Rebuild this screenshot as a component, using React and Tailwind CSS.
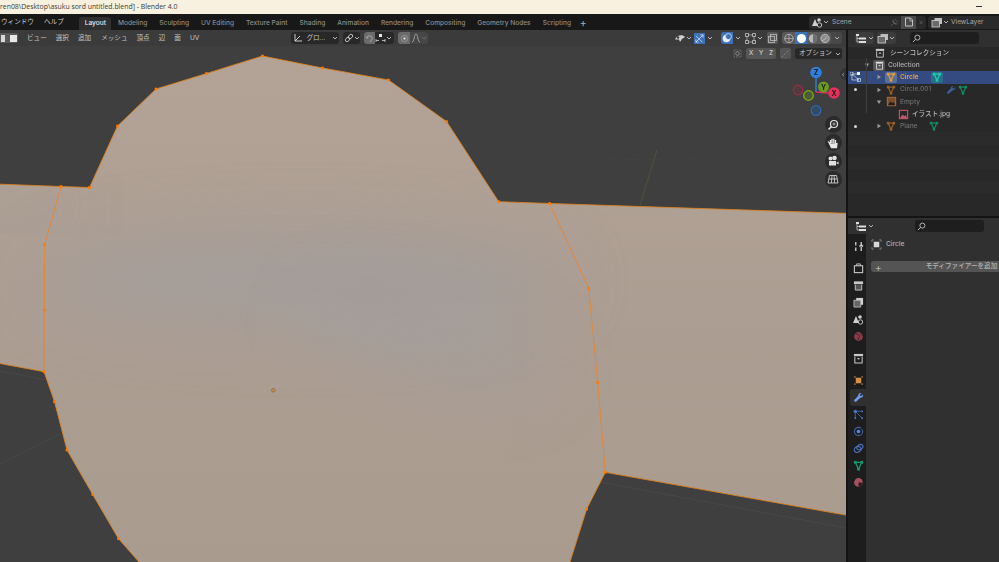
import React from 'react';

const UI_FONT = { fontFamily: 'Inter, "Noto Sans CJK JP", sans-serif' };

const outline = [
  [-5, 184], [61, 186.5], [89.5, 187.5], [117.5, 126], [156, 89], [206.5, 73.5], [262.5, 56], [322.5, 68], [388.5, 80],
  [446.6, 121.6], [498.7, 201.7], [549.7, 203.5], [851, 213.5], [851, 516], [605.3, 472.3], [586.7, 509], [570, 562],
  [570, 570], [139, 570], [139, 562], [118.5, 538.7], [92.7, 494.5], [67, 450], [54.5, 401.7], [44, 371.7], [-5, 362.6],
];
const innerEdges = [
  [[61, 186.5], [44.7, 244.5], [44.3, 310], [44, 371.7]],
  [[549.7, 203.5], [588.7, 288.3], [597.7, 382.3], [605.3, 472.3]],
];
const vertices = [
  [61, 186.5], [89.5, 187.5], [117.5, 126], [156, 89], [206.5, 73.5], [262.5, 56], [322.5, 68], [388.5, 80], [446.6, 121.6],
  [498.7, 201.7], [549.7, 203.5], [588.7, 288.3], [597.7, 382.3], [605.3, 472.3], [586.7, 509], [118.5, 538.7],
  [92.7, 494.5], [67, 450], [54.5, 401.7], [44, 371.7], [44.3, 310], [44.7, 244.5],
];
const pts = (list) => list.map((p) => p.join(',')).join(' ');

const tabs = ['Layout', 'Modeling', 'Sculpting', 'UV Editing', 'Texture Paint', 'Shading', 'Animation', 'Rendering', 'Compositing', 'Geometry Nodes', 'Scripting'];
const menus = [['ビュー', 'ml-[27px]'], ['選択', 'ml-[9px]'], ['追加', 'ml-[9px]'], ['メッシュ', 'ml-[10px]'], ['頂点', 'ml-[9px]'], ['辺', 'ml-[9px]'], ['面', 'ml-[9px]'], ['UV', 'ml-[9px]']];

const Chevron = ({ className = '' }) => (
  <svg width="6" height="6" viewBox="0 0 6 6" className={className}>
    <path d="M1 2l2 2 2-2" fill="none" stroke="#c4c4c4" strokeWidth="0.9" />
  </svg>
);

const Tri = ({ color = '#c9772e', size = 11 }) => (
  <svg width={size} height={size} viewBox="0 0 12 12">
    <path d="M2.5 2.5h7L6 10z" fill="none" stroke={color} strokeWidth="1.4" />
    <rect x="1" y="1" width="3" height="3" fill={color} />
    <rect x="8" y="1" width="3" height="3" fill={color} />
    <rect x="4.5" y="8.5" width="3" height="3" fill={color} />
  </svg>
);

const Wrench = ({ color = '#6f9cf0', size = 11 }) => (
  <svg width={size} height={size} viewBox="0 0 12 12">
    <path d="M10.8 2.8L8.6 4.6 7.3 3.4 9.2 1.3C7.5.6 5.6 1.8 5.8 4L1.3 8.6c-.6.7 1.3 2.7 2 2L8 6.2c2.1.3 3.4-1.5 2.8-3.4z" fill={color} />
  </svg>
);

const Box = ({ size = 11, color = '#c8c8c8' }) => (
  <svg width={size} height={size} viewBox="0 0 12 12">
    <rect x="1" y="1" width="10" height="2.5" fill={color} />
    <path d="M2 4v7h8V4" fill="none" stroke={color} strokeWidth="1.1" />
    <rect x="4.8" y="5.5" width="2.4" height="1.4" fill={color} />
  </svg>
);

const Arrow = ({ down }) => (
  <svg width="6" height="6" viewBox="0 0 6 6">
    {down ? <path d="M.8 1.5h4.4L3 5z" fill="#9a9a9a" /> : <path d="M1.5.8v4.4L5 3z" fill="#9a9a9a" />}
  </svg>
);

const ImageIcon = ({ color }) => (
  <svg width="11" height="11" viewBox="0 0 12 12">
    <rect x="1.5" y="1.5" width="9" height="9" fill={color === '#a9683a' ? '#7c4f2c' : 'none'} stroke={color} strokeWidth="1.2" />
    <path d="M2 10l3-4 2 2 1.5-1.5L10 10z" fill={color === '#a9683a' ? '#1e1e1e' : color} />
  </svg>
);

const OutlinerIcon = () => (
  <svg width="13" height="11" viewBox="0 0 13 11">
    <rect x="1" y="1" width="3" height="2" fill="#ddd" />
    <rect x="4" y="4.5" width="7" height="2" fill="#ddd" />
    <rect x="4" y="8" width="7" height="2" fill="#ddd" />
    <path d="M2 3v6h2M2 5.5h2" stroke="#ddd" strokeWidth="0.7" fill="none" />
  </svg>
);

const DisplayModeIcon = () => (
  <svg width="12" height="11" viewBox="0 0 12 11">
    <rect x="3.5" y="1" width="7.5" height="6" fill="#bdbdbd" />
    <rect x="1" y="3.5" width="7.5" height="6.5" fill="#6a6a6a" stroke="#d0d0d0" strokeWidth="0.8" />
  </svg>
);

const Search = () => (
  <svg width="9" height="9" viewBox="0 0 10 10">
    <circle cx="6" cy="4" r="2.8" fill="none" stroke="#cfcfcf" strokeWidth="0.9" />
    <path d="M4 6L1 9" stroke="#cfcfcf" strokeWidth="1" />
  </svg>
);

const SceneIcon = () => (
  <svg width="12" height="11" viewBox="0 0 12 11">
    <path d="M1 9L4 2l3 7z" fill="#cfcfcf" />
    <circle cx="8" cy="3" r="1.8" fill="#cfcfcf" />
    <circle cx="8.5" cy="8" r="2.2" fill="none" stroke="#cfcfcf" strokeWidth="0.9" />
  </svg>
);

const Dot = () => <span className="block w-[3px] h-[3px] rounded-full bg-[#d8d8d8]" />;

const Row = ({ children, bg = '', mode }) => (
  <div className={`h-[12.2px] flex items-center pl-[1px] ${bg}`}>
    <span className="w-[12px] flex justify-center shrink-0">{mode}</span>
    {children}
  </div>
);

const RowLabel = ({ width, color, children, className = '' }) => (
  <span style={{ width }} className={`ml-[3px] text-[6.6px] font-medium leading-none whitespace-nowrap shrink-0 ${color} ${className}`}>{children}</span>
);

const TabIcon = ({ children, active, className = '' }) => (
  <div className={`h-[17px] w-[16px] ml-[2px] flex items-center justify-center shrink-0 ${active ? 'bg-[#303030] rounded-l-[3px]' : ''} ${className}`}>
    {children}
  </div>
);

const NavButton = ({ children }) => (
  <div className="w-[17px] h-[17px] rounded-full bg-[#2b2b2b] flex items-center justify-center">{children}</div>
);

const Viewport = () => (
  <svg className="absolute inset-0" width="846" height="532" viewBox="0 30 846 532">
    <defs>
      <clipPath id="meshClip"><polygon points={pts(outline)} /></clipPath>
      <filter id="soft" x="-40%" y="-100%" width="180%" height="300%"><feGaussianBlur stdDeviation="32" /></filter>
      <linearGradient id="meshFill" x1="0" y1="56" x2="0" y2="562" gradientUnits="userSpaceOnUse">
        <stop offset="0" stopColor="#b3a396" />
        <stop offset="0.5" stopColor="#ad9e93" />
        <stop offset="1" stopColor="#aa9b8f" />
      </linearGradient>
    </defs>
    {/* floor grid, barely visible */}
    <g stroke="#525252" strokeWidth="0.7" opacity="0.7">
      <path d="M0 371L47 380M0 464L62 433M600 482L846 528" />
      <path d="M510 190L846 185M540 175L846 170M560 160L846 158M720 180L760 210" opacity="0.4" />
    </g>
    <path d="M640 205L657 150" stroke="#4d5a3c" strokeWidth="0.8" />
    <polygon points={pts(outline)} fill="url(#meshFill)" />
    <g clipPath="url(#meshClip)">
      <ellipse cx="300" cy="280" rx="270" ry="48" fill="#9d9d9f" opacity="0.55" filter="url(#soft)" />
      <ellipse cx="430" cy="340" rx="130" ry="45" fill="#9d9d9f" opacity="0.45" filter="url(#soft)" transform="rotate(15 430 340)" />
      <ellipse cx="15" cy="205" rx="60" ry="10" fill="#9c9c9e" opacity="0.7" filter="url(#soft)" />
    </g>
    <polygon points={pts(outline)} fill="none" stroke="#d9801f" strokeWidth="0.9" />
    {innerEdges.map((e, i) => (
      <polyline key={i} points={pts(e)} fill="none" stroke="#e2873a" strokeWidth="1" />
    ))}
    {vertices.map(([x, y], i) => (
      <rect key={i} x={x - 1.3} y={y - 1.3} width="2.6" height="2.6" fill="#ff7a00" />
    ))}
    <circle cx="273.3" cy="390.3" r="1.8" fill="#d88a3a" stroke="#7d6a58" strokeWidth="0.8" />
    {/* navigation gizmo */}
    <path d="M816 92V78" stroke="#2e7fd6" strokeWidth="1.5" />
    <path d="M816 92L829 93" stroke="#e0305a" strokeWidth="1.5" />
    <circle cx="798" cy="90" r="4.8" fill="#543a40" stroke="#96303f" strokeWidth="1.2" />
    <circle cx="816" cy="110.5" r="4.8" fill="#344a63" stroke="#2b6cb4" strokeWidth="1.2" />
    <circle cx="808.5" cy="95.5" r="4.8" fill="#4c5a35" stroke="#7aac1e" strokeWidth="1.3" />
    <circle cx="823.5" cy="87" r="5.5" fill="#6b9a1c" />
    <circle cx="816" cy="72.5" r="5.8" fill="#2e80dc" />
    <circle cx="834" cy="93" r="5.8" fill="#e6305c" />
    <g fontSize="7" fontWeight="700" textAnchor="middle" fill="#1c1c1c" style={UI_FONT}>
      <text x="816" y="75">Z</text>
      <text x="823.5" y="89.5">Y</text>
      <text x="834" y="95.5">X</text>
    </g>
  </svg>
);

const ViewportHeader = () => (
  <div className="relative h-[16px] bg-[#3b3b3b] flex items-center text-[6.6px] text-[#c4c4c4] leading-none">
    <div className="absolute left-[-2px] top-[3px] flex">
      <span className="w-[10px] h-[10px] bg-[#585858] rounded-l-[2px] flex items-center justify-center"><span className="block w-[4px] h-[7px] bg-[#d8d8d8]" /></span>
      <span className="w-[10px] h-[10px] bg-[#585858] rounded-r-[2px] flex items-center justify-center"><span className="block w-[7px] h-[7px] bg-[#e8e8e8]" /></span>
    </div>
    {menus.map(([m, margin]) => (
      <span key={m} className={`${margin} whitespace-nowrap`}>{m}</span>
    ))}
    <div className="ml-[92px] w-[48px] h-[12px] bg-[#282828] rounded-[3px] flex items-center pl-[2px]">
      <svg width="10" height="10" viewBox="0 0 10 10"><path d="M2 1v7h7M2 8l5-5" stroke="#ddd" strokeWidth="0.9" fill="none" /></svg>
      <span className="ml-[3px]">グロ...</span>
      <Chevron className="ml-auto mr-[1px]" />
    </div>
    <div className="ml-[4px] w-[17px] h-[12px] bg-[#282828] rounded-[3px] flex items-center pl-[1px]">
      <svg width="10" height="10" viewBox="0 0 10 10"><ellipse cx="3.5" cy="6.5" rx="2.5" ry="1.8" transform="rotate(-45 3.5 6.5)" fill="none" stroke="#ddd" strokeWidth="0.8" /><ellipse cx="6.5" cy="3.5" rx="2.5" ry="1.8" transform="rotate(-45 6.5 3.5)" fill="none" stroke="#ddd" strokeWidth="0.8" /></svg>
      <Chevron />
    </div>
    <div className="ml-[4px] w-[30px] h-[12px] bg-[#282828] rounded-[3px] flex items-center">
      <span className="w-[11px] h-[12px] bg-[#6b6b6b] rounded-l-[3px] flex items-center justify-center">
        <svg width="9" height="9" viewBox="0 0 10 10"><path d="M2 5a3 3 0 116 0c0 2-2 2-2 4M1 3l2 2" stroke="#a8a8a8" strokeWidth="1.1" fill="none" /></svg>
      </span>
      <svg width="11" height="9" viewBox="0 0 11 9"><rect x="4" y="0" width="3" height="3" fill="#e8e8e8" /><path d="M1 5v3M10 5v3M1 6.5h3M7 6.5h3" stroke="#cfcfcf" strokeWidth="0.8" /></svg>
      <Chevron />
    </div>
    <div className="ml-[4px] w-[30px] h-[12px] bg-[#474747] rounded-[3px] flex items-center">
      <span className="w-[12px] h-[12px] bg-[#6b6b6b] rounded-l-[3px] flex items-center justify-center">
        <svg width="9" height="9" viewBox="0 0 10 10"><circle cx="5" cy="5" r="3.5" fill="none" stroke="#9a9a9a" strokeWidth="0.9" /><circle cx="5" cy="5" r="1.3" fill="#cfcfcf" /></svg>
      </span>
      <svg className="ml-[1px]" width="10" height="10" viewBox="0 0 10 10"><path d="M1 9c2.5 0 2-8 4-8s1.5 8 4 8" stroke="#a8a8a8" strokeWidth="0.9" fill="none" /></svg>
      <Chevron className="opacity-30" />
    </div>

    {/* right cluster: gizmos, overlays, shading */}
    <div className="ml-auto flex items-center">
      <svg width="12" height="11" viewBox="0 0 12 11"><path d="M1 6.5C3 1.5 9 1.5 11 4L8 6l-2 3-1-2.5z" fill="#cfcfcf" /><circle cx="4" cy="4.5" r="1.2" fill="#3b3b3b" /></svg>
      <Chevron />
      <span className="ml-[2px] w-[11px] h-[11px] bg-[#3f71b8] flex items-center justify-center">
        <svg width="9" height="9" viewBox="0 0 10 10"><path d="M1 9l8-8M1 2l7 7M6 1h3v3M1 6v3h3" stroke="#dfe9f7" strokeWidth="0.8" fill="none" /></svg>
      </span>
      <Chevron className="ml-[2px]" />
      <span className="ml-[8px] w-[12px] h-[12px] bg-[#3f71b8] rounded-l-[3px] flex items-center justify-center">
        <svg width="10" height="10" viewBox="0 0 10 10"><circle cx="4.5" cy="5.5" r="3.8" fill="#e8eef8" /><circle cx="6.5" cy="3.5" r="3" fill="#3f71b8" stroke="#e8eef8" strokeWidth="0.7" /></svg>
      </span>
      <Chevron className="ml-[2px]" />
      <svg className="ml-[4px]" width="11" height="11" viewBox="0 0 11 11"><rect x="2" y="2" width="7" height="7" fill="none" stroke="#bbb" strokeWidth="0.7" /><path d="M.5 .5h3v3h-3zM7.5 .5h3v3h-3zM.5 7.5h3v3h-3zM7.5 7.5h3v3h-3z" fill="#3b3b3b" stroke="#ddd" strokeWidth="0.7" /></svg>
      <Chevron className="ml-[1px]" />
      <span className="ml-[4px] w-[11px] h-[12px] bg-[#585858] rounded-[2px] flex items-center justify-center">
        <svg width="9" height="9" viewBox="0 0 9 9"><rect x="2.5" y=".5" width="6" height="6" fill="none" stroke="#bdbdbd" strokeWidth="0.8" /><rect x=".5" y="2.5" width="6" height="6" fill="none" stroke="#bdbdbd" strokeWidth="0.8" /></svg>
      </span>
      <div className="ml-[4px] flex items-center bg-[#5a5a5a] rounded-[3px] h-[12px] pl-[1px]">
        <svg width="12" height="11" viewBox="0 0 12 11"><circle cx="6" cy="5.5" r="4.2" fill="none" stroke="#c2c2c2" strokeWidth="0.8" /><path d="M1.8 5.5h8.4M6 1.3v8.4" stroke="#c2c2c2" strokeWidth="0.6" /></svg>
        <span className="w-[12px] h-[12px] bg-[#3f71b8] flex items-center justify-center"><span className="block w-[9px] h-[9px] rounded-full bg-white" /></span>
        <svg width="12" height="11" viewBox="0 0 12 11"><circle cx="6" cy="5.5" r="4.2" fill="#b8b8b8" /><path d="M6 1.3a4.2 4.2 0 010 8.4z" fill="#6e6e6e" /></svg>
        <svg width="12" height="11" viewBox="0 0 12 11"><circle cx="6" cy="5.5" r="4.2" fill="#8a8a8a" stroke="#c8c8c8" strokeWidth="0.8" /><path d="M3 7.5c2 0 4-2 4.5-4" stroke="#c8c8c8" strokeWidth="0.8" fill="none" /></svg>
      </div>
      <span className="w-[11px] h-[12px] bg-[#474747] rounded-r-[3px] flex items-center justify-center mr-[4px]"><Chevron /></span>
    </div>
  </div>
);

const Outliner = () => (
  <div className="relative h-[186px] bg-[#282828] overflow-hidden">
    <div className="h-[17px] bg-[#303030] flex items-center pl-[7px] pb-[1px]">
      <span className="w-[19px] h-[12px] bg-[#3c3c3c] rounded-[3px] flex items-center"><OutlinerIcon /><Chevron /></span>
      <span className="ml-[3px] w-[19px] h-[12px] bg-[#3c3c3c] rounded-[3px] flex items-center"><DisplayModeIcon /><Chevron /></span>
      <span className="ml-[14px] w-[69px] h-[12px] bg-[#1e1e1e] rounded-[3px] flex items-center pl-[2px]"><Search /></span>
    </div>
    <Row>
      <span className="ml-[14px]"><Box size={10} /></span>
      <RowLabel width={80} color="text-[#b8b8b8]" className="ml-[5px]">シーンコレクション</RowLabel>
    </Row>
    <Row bg="bg-[#2c2c2c]">
      <span className="ml-[3px]"><Arrow down /></span>
      <span className="ml-[3px] w-[12px] h-[11px] bg-[#555] rounded-[2px] flex items-center justify-center"><Box size={9} color="#e0e0e0" /></span>
      <RowLabel width={60} color="text-[#b0b0b0]" className="ml-[2px]">Collection</RowLabel>
    </Row>
    <Row bg="bg-[#334b80]" mode={
      <svg width="11" height="10" viewBox="0 0 11 10"><path d="M2 2h7M2 2v6h7M2 2l7 6" stroke="#d0dcf0" strokeWidth="0.7" fill="none" /><rect x="7" y="0" width="3" height="3" fill="#f0f0f0" /><rect x="0" y="0" width="3" height="3" fill="none" stroke="#d0dcf0" strokeWidth="0.7" /><rect x="7.5" y="6.5" width="3" height="3" fill="none" stroke="#d0dcf0" strokeWidth="0.7" /></svg>
    }>
      <span className="ml-[15px]"><Arrow /></span>
      <span className="ml-[3px] w-[12px] h-[11px] bg-[#5b7099] rounded-[2px] flex items-center justify-center"><Tri color="#e59a3c" size={10} /></span>
      <RowLabel width={31} color="text-[#f0a040]" className="font-semibold">Circle</RowLabel>
      <span className="w-[12px] h-[11px] bg-[#2a6f8a] rounded-[2px] flex items-center justify-center"><Tri color="#19d0a8" size={10} /></span>
    </Row>
    <Row mode={<Dot />}>
      <span className="ml-[15px]"><Arrow /></span>
      <span className="ml-[3px] w-[12px] flex justify-center"><Tri color="#9a5f2a" size={10} /></span>
      <RowLabel width={46} color="text-[#6e6e6e]">Circle.001</RowLabel>
      <Wrench color="#3e5f9c" size={10} />
      <span className="ml-[2px]"><Tri color="#138a5e" size={10} /></span>
    </Row>
    <Row>
      <span className="ml-[15px]"><Arrow down /></span>
      <span className="ml-[3px] w-[12px] flex justify-center"><ImageIcon color="#a9683a" /></span>
      <RowLabel width={40} color="text-[#6e6e6e]">Empty</RowLabel>
    </Row>
    <Row>
      <span className="ml-[36px] w-[12px] flex justify-center"><ImageIcon color="#c0596a" /></span>
      <RowLabel width={50} color="text-[#b8b8b8]" className="ml-[2px]">イラスト.jpg</RowLabel>
    </Row>
    <Row mode={<Dot />}>
      <span className="ml-[15px]"><Arrow /></span>
      <span className="ml-[3px] w-[12px] flex justify-center"><Tri color="#9a5f2a" size={10} /></span>
      <RowLabel width={29} color="text-[#6e6e6e]">Plane</RowLabel>
      <Tri color="#138a5e" size={10} />
    </Row>
    <Row bg="bg-[#2b2b2b]" />
    <Row />
    <Row bg="bg-[#2b2b2b]" />
    <Row />
    <Row bg="bg-[#2b2b2b]" />
    <Row />
    <span className="absolute left-[18px] top-[28px] w-px h-[55px] bg-[#3f3f3f]" />
  </div>
);

const Properties = () => (
  <div className="flex-1 flex flex-col bg-[#303030] min-h-0 overflow-hidden">
    <div className="h-[16px] flex items-center pl-[7px] bg-[#303030] shrink-0">
      <span className="w-[19px] h-[12px] flex items-center"><OutlinerIcon /><Chevron /></span>
      <span className="ml-[41px] w-[69px] h-[12px] bg-[#1e1e1e] rounded-[3px] flex items-center pl-[2px]"><Search /></span>
    </div>
    <div className="flex-1 flex min-h-0">
      <div className="w-[18px] bg-[#1d1d1d] flex flex-col pt-[3.5px] shrink-0">
        <TabIcon><svg width="11" height="11" viewBox="0 0 12 12"><path d="M3 1v4M3 7v4M9 1v3l-2 2M9 4l2 2M9 6v5" stroke="#c8c8c8" strokeWidth="1.5" fill="none" /></svg></TabIcon>
        <TabIcon className="mt-[5px]"><svg width="11" height="11" viewBox="0 0 12 12"><rect x="1.5" y="3" width="9" height="7.5" fill="none" stroke="#c8c8c8" strokeWidth="1.2" /><path d="M4 3V1h4v2" stroke="#c8c8c8" strokeWidth="1" fill="none" /></svg></TabIcon>
        <TabIcon><svg width="11" height="11" viewBox="0 0 12 12"><rect x="1" y="1.5" width="10" height="3" fill="#c8c8c8" /><path d="M2.5 5v6h7V5" stroke="#c8c8c8" strokeWidth="1" fill="#555" /></svg></TabIcon>
        <TabIcon><svg width="11" height="11" viewBox="0 0 12 12"><rect x="3.5" y="1" width="7.5" height="7.5" fill="#cfcfcf" /><path d="M1 11V3.5h7.5V11z" fill="#666" stroke="#cfcfcf" strokeWidth="0.8" /></svg></TabIcon>
        <TabIcon><SceneIcon /></TabIcon>
        <TabIcon><svg width="11" height="11" viewBox="0 0 12 12"><circle cx="6" cy="6" r="4.8" fill="#8c3a48" /><path d="M3 3c2 1 3 0 4 2s-2 2-1 5M8 2c1 1 2 2 2 3" stroke="#2a2a2a" strokeWidth="1" fill="none" /></svg></TabIcon>
        <TabIcon className="mt-[5px]"><Box size={11} /></TabIcon>
        <TabIcon className="mt-[5px]"><svg width="11" height="11" viewBox="0 0 12 12"><rect x="3" y="3" width="6" height="6" fill="#d98f45" /><path d="M1 1h2v2H1zM9 1h2v2H9zM1 9h2v2H1zM9 9h2v2H9z" fill="#7c5a36" /></svg></TabIcon>
        <TabIcon active><Wrench /></TabIcon>
        <TabIcon><svg width="11" height="11" viewBox="0 0 12 12"><circle cx="2.5" cy="2.5" r="1.8" fill="#4a78c8" /><circle cx="10" cy="2.5" r="1" fill="#4a78c8" /><circle cx="2.5" cy="10" r="1" fill="#4a78c8" /><circle cx="10" cy="10" r="1" fill="#4a78c8" /><path d="M2.5 2.5L10 10M2.5 2.5H10M2.5 2.5V10" stroke="#4a78c8" strokeWidth="0.8" /></svg></TabIcon>
        <TabIcon><svg width="11" height="11" viewBox="0 0 12 12"><circle cx="6" cy="6" r="4.5" fill="none" stroke="#3c5f9e" strokeWidth="1.2" /><circle cx="6" cy="6" r="2" fill="#5a88dc" /><circle cx="10" cy="2.5" r="1.2" fill="#1d1d1d" /></svg></TabIcon>
        <TabIcon><svg width="11" height="11" viewBox="0 0 12 12"><ellipse cx="5" cy="7" rx="3.8" ry="3" transform="rotate(-30 5 7)" fill="none" stroke="#4a72bc" strokeWidth="1.3" /><ellipse cx="7.5" cy="4.5" rx="3.5" ry="2.6" transform="rotate(-30 7.5 4.5)" fill="none" stroke="#4a72bc" strokeWidth="1.3" /></svg></TabIcon>
        <TabIcon><Tri color="#0f9a68" /></TabIcon>
        <TabIcon><svg width="11" height="11" viewBox="0 0 12 12"><circle cx="6" cy="6" r="4.8" fill="#a8505e" /><path d="M6 6h4.8A4.8 4.8 0 016 10.8z" fill="#2a2020" /></svg></TabIcon>
      </div>
      <div className="flex-1 min-w-0 text-[6.6px] leading-none font-medium text-[#b4b4b4]">
        <div className="flex items-center pl-[5px] mt-[5px] h-[11px]">
          <svg width="11" height="11" viewBox="0 0 12 12"><rect x="3" y="3" width="6" height="6" fill="#d8d8d8" /><path d="M1 3V1h2M9 1h2v2M11 9v2H9M3 11H1V9" stroke="#9a9a9a" strokeWidth="0.8" fill="none" /></svg>
          <span className="ml-[4px]">Circle</span>
        </div>
        <div className="ml-[5px] mt-[11px] w-[129px] h-[11px] bg-[#545454] rounded-l-[3px] flex items-center whitespace-nowrap">
          <span className="ml-[4px] text-[10px] font-normal">+</span>
          <span className="ml-[44px]">モディファイアーを追加</span>
        </div>
      </div>
    </div>
  </div>
);

export default function App() {
  return (
    <div className="w-[999px] h-[562px] overflow-hidden flex flex-col bg-[#181818] select-none blur-[0.25px]" style={UI_FONT}>
      {/* window title */}
      <div className="relative h-[14px] bg-[#f8f1df] flex items-center shrink-0 overflow-hidden">
        <span className="text-[6.9px] leading-none text-[#3a3a3a] whitespace-nowrap" style={{ fontFamily: '"Open Sans", sans-serif' }}>ren08\Desktop\asuku sord untitled.blend] - Blender 4.0</span>
        <span className="absolute left-[976px] top-[6px] w-[6px] h-px bg-[#333]" />
      </div>

      {/* top bar */}
      <div className="h-[16px] bg-[#181818] flex items-end shrink-0 text-[6.6px] leading-none">
        <div className="h-[16px] flex items-center text-[#c8c8c8] ml-[1px]">
          <span>ウィンドウ</span>
          <span className="ml-[10px]">ヘルプ</span>
        </div>
        <div className="ml-[15.5px] flex items-end font-medium">
          {tabs.map((t) => (
            <span key={t} className={`h-[13.5px] px-[5.5px] mr-[1px] flex items-center rounded-t-[3px] whitespace-nowrap ${t === 'Layout' ? 'bg-[#303030] text-[#e8e8e8]' : 'text-[#8a8a8a]'}`}>{t}</span>
          ))}
          <span className="h-[13.5px] px-[2px] flex items-center text-[#a8a8a8] text-[11px] font-normal">+</span>
        </div>
        <div className="ml-auto h-[16px] flex items-center">
          <div className="w-[117px] h-[13px] bg-[#2a2a2a] rounded-[3px] flex items-center pl-[2px] text-[#a8a8a8]">
            <SceneIcon /><Chevron />
            <span className="ml-[3px]">Scene</span>
            <svg className="ml-auto" width="9" height="9" viewBox="0 0 10 10"><path d="M1 9l3-3M3 3l4 4M5 1l4 4M4 2L3 4l3 3 2-1" stroke="#666" strokeWidth="0.9" fill="none" /></svg>
            <span className="ml-[2px] w-[15px] h-[13px] bg-[#4a4a4a] flex items-center justify-center">
              <svg width="10" height="10" viewBox="0 0 10 10"><path d="M1.5 1h5l2 2v6h-7z" fill="none" stroke="#d0d0d0" strokeWidth="0.9" /><path d="M6 1v3h3" fill="none" stroke="#d0d0d0" strokeWidth="0.7" /></svg>
            </span>
            <span className="w-[10px] text-center text-[#666]">×</span>
          </div>
          <div className="ml-[2px] w-[71px] h-[13px] bg-[#2a2a2a] rounded-l-[3px] flex items-center pl-[3px] text-[#a8a8a8]">
            <DisplayModeIcon /><Chevron />
            <span className="ml-[2px]">ViewLayer</span>
          </div>
        </div>
      </div>

      {/* main area */}
      <div className="flex-1 flex min-h-0">
        <div className="relative w-[846px] bg-[#3f3f3f] overflow-hidden shrink-0">
          <Viewport />
          <ViewportHeader />

          {/* axis lock + options row */}
          <div className="absolute right-[4px] top-[16px] h-[15px] flex items-center bg-[#3d3d3d] rounded-b-[3px] text-[6.6px] leading-none text-[#c8c8c8] pl-[3px] whitespace-nowrap">
            <svg width="11" height="11" viewBox="0 0 11 11"><path d="M2 2h7v7H2z" fill="none" stroke="#888" strokeWidth="0.7" strokeDasharray="1.5 1" /><circle cx="5.5" cy="5.5" r="1.8" fill="none" stroke="#aaa" strokeWidth="0.7" /></svg>
            <div className="ml-[3px] flex bg-[#555] rounded-[2px] font-medium">
              <span className="w-[10px] h-[11px] flex items-center justify-center">X</span>
              <span className="w-[10px] h-[11px] flex items-center justify-center">Y</span>
              <span className="w-[10px] h-[11px] flex items-center justify-center">Z</span>
            </div>
            <span className="ml-[4px] w-[11px] h-[11px] bg-[#555] rounded-[2px] flex items-center justify-center">
              <svg width="9" height="9" viewBox="0 0 9 9"><path d="M1 8L8 1" stroke="#888" strokeWidth="1" strokeDasharray="1.5 1" /></svg>
            </span>
            <span className="ml-[4px] w-[47px] h-[11px] bg-[#282828] rounded-[3px] flex items-center pl-[4px]">オプション<Chevron className="ml-auto mr-[1px]" /></span>
          </div>

          {/* side gizmo buttons */}
          <div className="absolute left-[824.5px] top-[86px] flex flex-col gap-[1.3px]">
            <NavButton>
              <svg width="12" height="12" viewBox="0 0 12 12"><circle cx="7" cy="5" r="3.5" fill="none" stroke="#e0e0e0" strokeWidth="1.2" /><path d="M4.5 7.5L1.5 10.5" stroke="#e0e0e0" strokeWidth="1.7" /><path d="M5.5 5h3M7 3.5v3" stroke="#e0e0e0" strokeWidth="0.7" /></svg>
            </NavButton>
            <NavButton>
              <svg width="12" height="12" viewBox="0 0 12 12"><path d="M3.5 6.5V3M5 6V1.8M6.8 6V1.8M8.5 6.5V3M3.5 6.5L2 5.5l2.5 5h5l.5-4.5" stroke="#e8e8e8" strokeWidth="1.3" fill="#e8e8e8" /></svg>
            </NavButton>
            <NavButton>
              <svg width="12" height="12" viewBox="0 0 12 12"><circle cx="3.5" cy="3.5" r="2" fill="#e0e0e0" /><circle cx="7.5" cy="3" r="2.3" fill="#e0e0e0" /><rect x="2" y="6" width="7" height="4.5" fill="#e0e0e0" /><path d="M9 8l2.5-1.5v3z" fill="#e0e0e0" /></svg>
            </NavButton>
            <NavButton>
              <svg width="12" height="12" viewBox="0 0 12 12"><path d="M2.5 2.5h7L11 10H1zM5 2.5L4.3 10M7 2.5l.7 7.5M2 6h8" stroke="#e0e0e0" strokeWidth="0.8" fill="none" /></svg>
            </NavButton>
          </div>
          <span className="absolute left-[840px] top-[38px] w-[6px] h-[12px] bg-[#333] rounded-l-full flex items-center justify-center text-[7px] text-[#aaa] leading-none">‹</span>
        </div>

        {/* right column */}
        <div className="flex-1 min-w-0 flex flex-col bg-[#141414] pl-[2px]">
          <Outliner />
          <div className="h-[2px] shrink-0" />
          <Properties />
        </div>
      </div>
    </div>
  );
}
